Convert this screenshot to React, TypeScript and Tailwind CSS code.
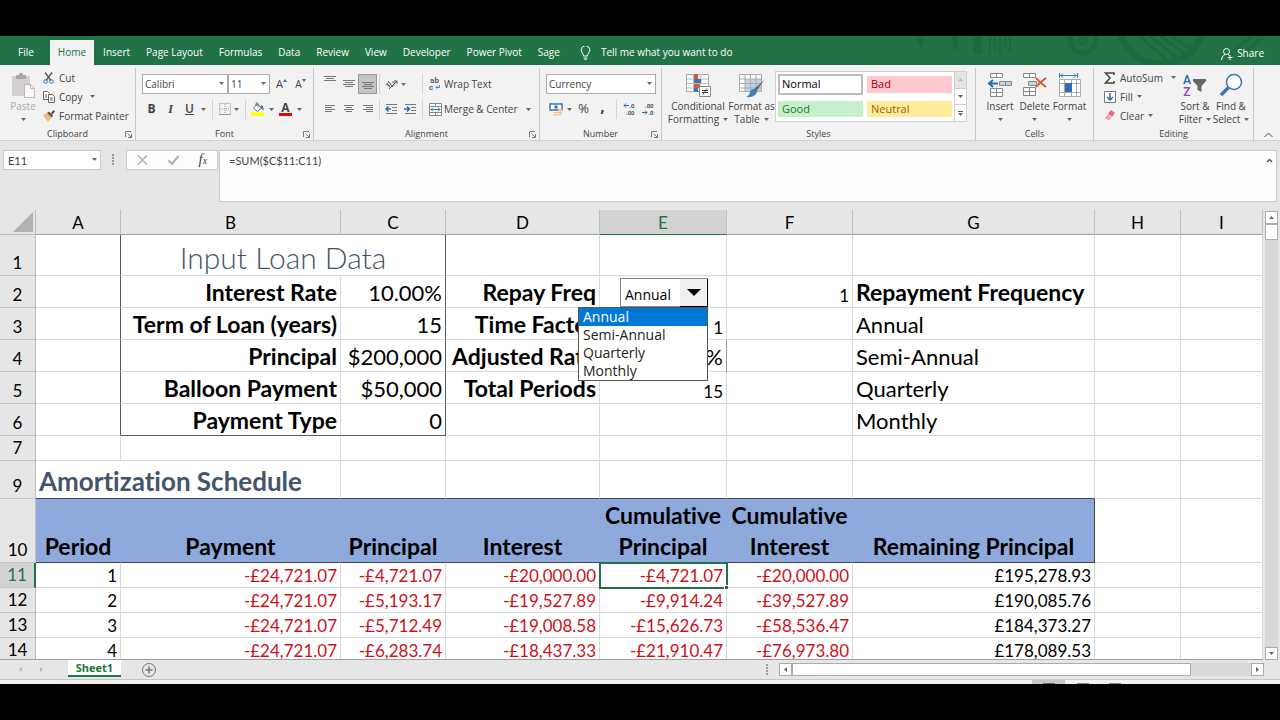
import React, { useState } from 'react';
import { twMerge } from 'tailwind-merge';

const tabs = [
  'File',
  'Home',
  'Insert',
  'Page Layout',
  'Formulas',
  'Data',
  'Review',
  'View',
  'Developer',
  'Power Pivot',
  'Sage',
];

const freqs = ['Annual', 'Semi-Annual', 'Quarterly', 'Monthly'];

const schedule = [
  ['1', '-£24,721.07', '-£4,721.07', '-£20,000.00', '-£4,721.07', '-£20,000.00', '£195,278.93'],
  ['2', '-£24,721.07', '-£5,193.17', '-£19,527.89', '-£9,914.24', '-£39,527.89', '£190,085.76'],
  ['3', '-£24,721.07', '-£5,712.49', '-£19,008.58', '-£15,626.73', '-£58,536.47', '£184,373.27'],
  ['4', '-£24,721.07', '-£6,283.74', '-£18,437.33', '-£21,910.47', '-£76,973.80', '£178,089.53'],
];

const Caret = ({ className = '' }: { className?: string }) => (
  <svg width="5" height="3" viewBox="0 0 5 3" className={twMerge('shrink-0 text-[#666]', className)}>
    <path d="M0 0h5L2.5 3z" fill="currentColor" />
  </svg>
);

const Sep = () => <span className="h-5 w-px shrink-0 bg-[#d4d4d4]" />;

const Launcher = () => (
  <svg width="7" height="7" viewBox="0 0 7 7" fill="none" stroke="#777">
    <path d="M.5 6V.5H6M2.5 2.5l3.5 3.5M6.5 3v3.5H3" />
  </svg>
);

type GroupProps = {
  label: string;
  className: string;
  launcher?: boolean;
  children: React.ReactNode;
};

const Group = ({ label, className, launcher, children }: GroupProps) => (
  <section
    aria-label={label}
    className={twMerge('flex shrink-0 flex-col border-r border-[#c8c8c8]', className)}
  >
    <div className="flex h-[61px] items-start">{children}</div>
    <div className="flex h-3 items-center px-0.5">
      <span className="w-2" />
      <span className="flex-1 text-center text-[9px] leading-3 text-[#444]">{label}</span>
      <button aria-label={`${label} settings`} className="w-2">
        {launcher && <Launcher />}
      </button>
    </div>
  </section>
);

type ToolProps = {
  label: string;
  className?: string;
  children: React.ReactNode;
};

const Tool = ({ label, className, children }: ToolProps) => (
  <button
    aria-label={label}
    className={twMerge('flex h-5 w-[19px] shrink-0 items-center justify-center', className)}
  >
    {children}
  </button>
);

type BigProps = {
  lines: string[];
  className: string;
  caretBelow?: boolean;
  children: React.ReactNode;
};

const BigButton = ({ lines, className, caretBelow, children }: BigProps) => (
  <button className={twMerge('flex shrink-0 flex-col items-center text-[10px] leading-[13px]', className)}>
    <span className="flex h-[30px] items-center">{children}</span>
    {lines.map((line, i) => (
      <span key={line} className="flex items-center gap-1 whitespace-nowrap">
        {line}
        {!caretBelow && i === lines.length - 1 && <Caret />}
      </span>
    ))}
    {caretBelow && (
      <span className="flex h-[13px] items-center">
        <Caret />
      </span>
    )}
  </button>
);

const SmallButton = ({ label, caret, children }: { label: string; caret?: string; children: React.ReactNode }) => (
  <button className="flex h-[19px] items-center whitespace-nowrap text-[10px] leading-4">
    <span className="flex w-4 items-center">{children}</span>
    {label}
    {caret && <Caret className={caret} />}
  </button>
);

// paragraph glyph, one stroke width per line
const Lines = ({ rows, align = 'center' }: { rows: number[]; align?: string }) => (
  <svg width="12" height="10" viewBox="0 0 12 10" stroke="#777">
    {rows.map((w, i) => {
      const x = align === 'left' ? 1 : align === 'right' ? 11 - w : 6 - w / 2;
      return <path key={i} d={`M${x} ${i * 2 + 1.5}h${w}`} />;
    })}
  </svg>
);

const PasteIcon = () => (
  <svg width="24" height="26" viewBox="0 0 24 26">
    <path d="M1 4h18v20H1z" fill="#d2ced2" />
    <path d="M5 3h3c0-3 4-3 4 0h3v4H5z" fill="#aaa6aa" />
    <path d="M13.500 12.500h6l4 4v9h-10z" fill="#fafafa" stroke="#b8b8b8" />
    <path d="M19.500 12.500v4h4" fill="none" stroke="#b8b8b8" />
  </svg>
);

const CutIcon = () => (
  <svg width="12" height="12" viewBox="0 0 12 12" fill="none">
    <path d="M2 .5l6 8M9 .5l-6 8" stroke="#555" strokeWidth="1.300" />
    <circle cx="2.500" cy="9.500" r="1.800" stroke="#3b73b4" />
    <circle cx="8.500" cy="9.500" r="1.800" stroke="#3b73b4" />
  </svg>
);

const CopyIcon = () => (
  <svg width="12" height="12" viewBox="0 0 12 12" fill="#fff" stroke="#666">
    <path d="M.5.5h4l2 2v6h-6z" />
    <path d="M5.500 3.500h4l2 2v6h-6zM7 7h3M7 9h3M2 4h2M2 6h2" />
  </svg>
);

const PainterIcon = () => (
  <svg width="12" height="12" viewBox="0 0 12 12">
    <path d="M0 5l4-2 5 4-4 5z" fill="#efbc7c" />
    <path d="M4 3l2-1.500 4 4L9 7.500z" fill="#555" />
    <path d="M8 3l2.500-3L12 1.500 9.500 4.500z" fill="#555" />
  </svg>
);

const BordersIcon = () => (
  <svg width="12" height="12" viewBox="0 0 12 12" fill="none" stroke="#999">
    <path d="M.5.5h11v11H.5zM6 1v10M1 6h10" strokeDasharray="1 1" />
    <path d="M0 11.500h12" />
  </svg>
);

const FillIcon = () => (
  <svg width="14" height="14" viewBox="0 0 14 14">
    <path d="M2.500 6l4-4 4 4-4 3.500z" fill="#fff" stroke="#666" />
    <path d="M5 4V1.500q1.500-1.500 2 0V5" fill="none" stroke="#666" />
    <path d="M10 3q3 1 2.500 6-1-2-3-3z" fill="#3b73b4" />
    <path d="M0 10.500h13V14H0z" fill="#ffff00" />
  </svg>
);

const OrientIcon = () => (
  <svg width="14" height="12" viewBox="0 0 14 12" fill="none" stroke="#555">
    <path d="M1 6l4 3M3 3l5 6M5.500 6.500a1.500 1.500 0 1 1-2-2M7 4.500a1.500 1.500 0 1 1 1 2.500M4 11l8-8M12 6V3H9" />
  </svg>
);

const IndentIcon = ({ flip }: { flip?: boolean }) => (
  <svg width="13" height="12" viewBox="0 0 13 12" fill="none">
    <path d="M1 1.500h11M7 4.500h5M7 7.500h5M1 10.500h11" stroke="#777" />
    {flip ? (
      <path d="M0 6h5M3 3.500L5.500 6 3 8.500" stroke="#2b6cb0" strokeWidth="1.500" />
    ) : (
      <path d="M1 6h5M3.500 3.500L1 6l2.500 2.500" stroke="#2b6cb0" strokeWidth="1.500" />
    )}
  </svg>
);

const WrapIcon = () => (
  <span className="flex w-[11px] flex-col font-[Roboto] text-[8px] leading-[9px] font-semibold text-[#555]">
    <span className="h-[7px]">ab</span>
    <span className="flex items-center gap-0.5">
      c
      <svg width="5" height="5" viewBox="0 0 5 5" fill="none" stroke="#3b73b4">
        <path d="M4.500 0v2.500H1M2.500 1L1 2.500 2.500 4" />
      </svg>
    </span>
  </span>
);

const MergeIcon = () => (
  <svg width="13" height="13" viewBox="0 0 13 13" fill="#fff">
    <path d="M.5.5h12v12H.5zM.5 3.500h12M.5 9.500h12M6.500.5v3M6.500 9.500v3" stroke="#888" />
    <path d="M2 6.500h9M4 4.500l-2 2 2 2M9 4.500l2 2-2 2" fill="none" stroke="#3b73b4" />
  </svg>
);

const AccountIcon = () => (
  <svg width="14" height="13" viewBox="0 0 14 13">
    <path d="M1 1h12v6H1z" fill="#fff" stroke="#3b73b4" strokeWidth="1.500" />
    <circle cx="7" cy="4" r="1.800" fill="#3b73b4" />
    <path d="M5 9h5v3.500H5zM9.500 5.500H13V12H9.500z" fill="#f0c37c" />
    <path d="M5 10.500h8M9.500 8H13" stroke="#fff" strokeWidth=".7" />
  </svg>
);

const Arrow = ({ right }: { right?: boolean }) => (
  <svg width="6" height="5" viewBox="0 0 6 5" fill="none" stroke="#2b6cb0" className="shrink-0">
    <path d={right ? 'M0 2.500h5M3 .5l2 2-2 2' : 'M6 2.500H1M3 .5l-2 2 2 2'} />
  </svg>
);

const DecimalIcon = ({ dec }: { dec?: boolean }) => (
  <span className="flex w-3 flex-col font-[Roboto] text-[6px] leading-[7px] font-semibold text-[#444]">
    <span className="flex items-center justify-end">
      {!dec && <Arrow />}
      {dec ? '.00' : '.0'}
    </span>
    <span className="flex items-center justify-end">
      {dec && <Arrow right />}
      {dec ? '.0' : '.00'}
    </span>
  </span>
);

const CondIcon = () => (
  <svg width="25" height="24" viewBox="0 0 25 24">
    <path d="M.5 1.500h22v17H.5z" fill="#fff" stroke="#aaa" />
    <path d="M.5 6h22M.5 10.500h22M.5 15h22M7.500 1v18M15 1v18" stroke="#bbb" />
    <path d="M8 1h4v5H8zM8 11h6v4H8z" fill="#d65a31" />
    <path d="M8 6h7v4H8zM8 15h4v4H8z" fill="#3b73b4" />
    <path d="M13.500 13.500h11v10h-11z" fill="#fff" stroke="#888" />
    <path d="M16 17.500h6M16 19.500h6M21 15.500l-4 6" stroke="#444" fill="none" />
  </svg>
);

const TableIcon = () => (
  <svg width="26" height="25" viewBox="0 0 26 25">
    <path d="M.5 1.500h22v17H.5z" fill="#fff" stroke="#aaa" />
    <path d="M6 6h16v12H6z" fill="#bdd3ea" />
    <path d="M.5 6h22M.5 10.500h22M.5 15h22M6 1v18M11.500 1v18M17 1v18" stroke="#aaa" />
    <path d="M25 7l-8 12-3-2z" fill="#666" />
    <path d="M14 16l4 3q-2 6-11 5 4-2 4-5 1-3 3-3z" fill="#3b82bd" />
  </svg>
);

const InsertIcon = () => (
  <svg width="24" height="24" viewBox="0 0 24 24" fill="#fff" stroke="#888">
    <path d="M2.500.5h12v4h-12zM8.500.5v4M2.500 15.500h12v8h-12zM2.500 19.500h12M8.500 15.500v8" />
    <path d="M11.500 8.500h12v4h-12zM17.500 8.500v4" fill="#bdd3ea" />
    <path d="M10 10.500H1M5 7l-4 3.500L5 14" fill="none" stroke="#2b6cb0" strokeWidth="2" />
  </svg>
);

const DeleteIcon = () => (
  <svg width="24" height="24" viewBox="0 0 24 24" fill="#fff" stroke="#888">
    <path d="M.5.5h12v4H.5zM6.500.5v4M.5 14.500h12v8H.5zM.5 18.500h12M6.500 14.500v8" />
    <path d="M5.500 8.500h8v4h-8z" fill="#bdd3ea" />
    <path d="M13 5q4 5 10 9M23 5q-6 4-10 9" fill="none" stroke="#d9532c" strokeWidth="2" />
  </svg>
);

const FormatIcon = () => (
  <svg width="24" height="25" viewBox="0 0 24 25" fill="#fff">
    <path d="M1.500 6.500h21v17h-21zM1.500 10.500h21M1.500 19.500h21M6.500 6.500v17M13.500 6.500v17M18.500 6.500v17" stroke="#aaa" />
    <path d="M7 10h7v9H7z" fill="#2f6db5" />
    <path d="M1.500 0v5M19.500 0v5M2 2.500h17M5 .5L3 2.500l2 2M16 .5l2 2-2 2" fill="none" stroke="#3b82bd" />
  </svg>
);

const SortIcon = () => (
  <span className="flex items-start">
    <span className="flex flex-col font-[Roboto] text-[12px] leading-[14px] font-semibold">
      <span className="h-3 text-[#2f6db5]">A</span>
      <span className="h-3 text-[#8a4fc0]">Z</span>
    </span>
    <svg width="14" height="14" viewBox="0 0 14 14" className="mt-1.5 ml-0.5">
      <path d="M0 0h13v2L8.500 7v6l-4-2V7L0 2z" fill="#666" />
    </svg>
  </span>
);

const FindIcon = () => (
  <svg width="24" height="24" viewBox="0 0 24 24" fill="none" stroke="#3b76b0">
    <circle cx="15" cy="9" r="7.500" strokeWidth="1.500" fill="#fff" />
    <path d="M9.500 14.500L2 22" strokeWidth="3.500" />
  </svg>
);

const Header = () => (
  <header className="relative flex h-[29px] items-end overflow-hidden bg-[#217346] text-white">
    <svg
      width="460"
      height="29"
      viewBox="0 0 460 29"
      fill="none"
      stroke="#1e6a40"
      className="absolute top-0 right-0"
    >
      <path d="M95 1h10l-4 11zM132 0h6v13h-5z" fill="#1e6a40" stroke="none" />
      <path d="M153 0h9v18h-9z" fill="#1e6a40" stroke="none" />
      <path d="M170 0v18M175 0v14M180 0v18M185 0v12M190 0v16" strokeWidth="2" />
      <circle cx="263" cy="4" r="13" strokeWidth="5" />
      <circle cx="263" cy="4" r="4" strokeWidth="3" />
      <circle cx="341" cy="-14" r="42" strokeWidth="7" />
      <path d="M315-4l34 30M325-4l32 26M335-4l30 22M345-4l26 18M432 0l-26 22M444 0l-28 24" strokeWidth="3" />
    </svg>
    <nav className="relative flex h-[25px] pl-2.5 text-[10px]">
      {tabs.map((tab) => (
        <a
          key={tab}
          href="#"
          className={
            tab === 'Home'
              ? 'mr-px ml-2 flex items-center bg-[#f2f2f2] px-2 text-[#217346]'
              : 'flex items-center px-2 whitespace-nowrap'
          }
        >
          {tab}
        </a>
      ))}
    </nav>
    <div className="relative flex h-[25px] flex-1 items-center text-[10px]">
      <svg width="11" height="14" viewBox="0 0 11 14" fill="none" stroke="#fff" className="mr-2.5 ml-3">
        <path d="M3.500 10Q3.500 8 2 6.500a4.300 4.300 0 1 1 7 0Q7.500 8 7.500 10zM3.500 12h4M4.500 13.500h2" />
      </svg>
      <input
        aria-label="Tell me what you want to do"
        className="w-40 bg-transparent outline-none placeholder:text-white"
        placeholder="Tell me what you want to do"
      />
      <button className="mr-4 ml-auto flex items-center gap-1 pt-0.5">
        <svg width="12" height="12" viewBox="0 0 12 12" fill="none" stroke="#fff">
          <circle cx="5.500" cy="3.500" r="3" />
          <path d="M.5 12q0-4 3.500-5.500M7 6.500l1.500 1M9 7v5M6.500 9.500h5" />
        </svg>
        Share
      </button>
    </div>
  </header>
);

const Combo = ({ label, value, className }: { label: string; value: string; className: string }) => (
  <div className={twMerge('relative', className)}>
    <select
      aria-label={label}
      defaultValue={value}
      className="block h-5 w-full appearance-none border border-[#ababab] bg-white px-0.5 text-[10px] leading-4 text-[#444]"
    >
      <option>{value}</option>
    </select>
    <Caret className="pointer-events-none absolute top-2 right-1" />
  </div>
);

const Ribbon = () => (
  <div className="flex h-[76px] border-b border-[#d2d2d2] bg-[#f2f2f2] pt-[3px] text-[#444]">
    <Group label="Clipboard" launcher className="w-[136px]">
      <BigButton lines={['Paste']} caretBelow className="ml-2 w-[30px] pt-0.5 text-[#aaa]">
        <PasteIcon />
      </BigButton>
      <div className="ml-[5px] flex flex-col">
        <SmallButton label="Cut">
          <CutIcon />
        </SmallButton>
        <SmallButton label="Copy" caret="ml-2">
          <CopyIcon />
        </SmallButton>
        <SmallButton label="Format Painter">
          <PainterIcon />
        </SmallButton>
      </div>
    </Group>

    <Group label="Font" launcher className="w-[178px]">
      <div className="flex flex-col gap-[5px] pt-1.5 pl-1.5">
        <div className="flex">
          <Combo label="Font" value="Calibri" className="w-[86px]" />
          <Combo label="Font size" value="11" className="w-[42px]" />
          <Tool label="Grow font" className="ml-0.5 text-[11px]">
            A
            <svg width="4" height="3" viewBox="0 0 4 3" className="mb-2">
              <path d="M0 3l2-3 2 3z" fill="#3b73b4" />
            </svg>
          </Tool>
          <Tool label="Shrink font" className="text-[10px]">
            A
            <svg width="4" height="3" viewBox="0 0 4 3" className="mb-2">
              <path d="M0 0l2 3 2-3z" fill="#3b73b4" />
            </svg>
          </Tool>
        </div>
        <div className="flex items-center text-[12px]">
          <Tool label="Bold" className="font-bold">
            B
          </Tool>
          <Tool label="Italic" className="font-[Liberation_Serif] font-bold italic">
            I
          </Tool>
          <Tool label="Underline" className="font-semibold underline">
            U
          </Tool>
          <Caret className="mr-1.5 ml-0.5" />
          <Sep />
          <Tool label="Borders" className="ml-0.5">
            <BordersIcon />
          </Tool>
          <Caret className="mr-1.5" />
          <Sep />
          <Tool label="Fill color" className="ml-0.5">
            <FillIcon />
          </Tool>
          <Caret className="ml-0.5" />
          <Tool label="Font color" className="ml-0.5 flex-col text-[12px] leading-[11px] font-bold">
            A<span className="h-[3px] w-[13px] bg-[#e80000]" />
          </Tool>
          <Caret className="ml-0.5" />
        </div>
      </div>
    </Group>

    <Group label="Alignment" launcher className="w-[226px]">
      <div className="flex flex-col gap-[5px] pt-1.5 pl-1.5">
        <div className="flex items-center">
          <Tool label="Top align" className="pb-2">
            <Lines rows={[12, 8, 12]} />
          </Tool>
          <Tool label="Middle align">
            <Lines rows={[12, 8, 12, 8]} />
          </Tool>
          <Tool label="Bottom align" className="border border-[#999] bg-[#c5c5c5] pt-1">
            <Lines rows={[12, 8, 12, 8]} />
          </Tool>
          <span className="w-0.5" />
          <Sep />
          <Tool label="Orientation" className="ml-0.5">
            <OrientIcon />
          </Tool>
          <Caret className="mr-4" />
          <Sep />
          <button className="ml-1.5 flex h-5 items-center gap-1 whitespace-nowrap text-[10px]">
            <WrapIcon />
            Wrap Text
          </button>
        </div>
        <div className="flex items-center">
          <Tool label="Align left">
            <Lines rows={[10, 7, 10, 7]} align="left" />
          </Tool>
          <Tool label="Center">
            <Lines rows={[10, 6, 10, 6]} />
          </Tool>
          <Tool label="Align right">
            <Lines rows={[10, 7, 10, 7]} align="right" />
          </Tool>
          <span className="w-0.5" />
          <Sep />
          <Tool label="Decrease indent" className="ml-0.5">
            <IndentIcon />
          </Tool>
          <Tool label="Increase indent">
            <IndentIcon flip />
          </Tool>
          <span className="w-0.5" />
          <Sep />
          <button className="ml-1.5 flex h-5 items-center gap-0.5 whitespace-nowrap text-[10px]">
            <MergeIcon />
            Merge &amp; Center
            <Caret className="ml-1.5" />
          </button>
        </div>
      </div>
    </Group>

    <Group label="Number" launcher className="w-[122px]">
      <div className="flex flex-col gap-[5px] pt-1.5 pl-1.5">
        <Combo label="Number format" value="Currency" className="w-[110px]" />
        <div className="flex items-center text-[13px]">
          <Tool label="Accounting format">
            <AccountIcon />
          </Tool>
          <Caret className="ml-0.5" />
          <Tool label="Percent style" className="ml-0.5">
            %
          </Tool>
          <Tool label="Comma style" className="pb-1.5 text-[16px] font-bold">
            ,
          </Tool>
          <span className="w-1" />
          <Sep />
          <Tool label="Increase decimal" className="ml-0.5">
            <DecimalIcon />
          </Tool>
          <Tool label="Decrease decimal">
            <DecimalIcon dec />
          </Tool>
        </div>
      </div>
    </Group>

    <Group label="Styles" className="w-[314px]">
      <BigButton lines={['Conditional', 'Formatting']} className="ml-1.5 w-15 pt-0.5">
        <CondIcon />
      </BigButton>
      <BigButton lines={['Format as', 'Table']} className="w-[47px] pt-0.5">
        <TableIcon />
      </BigButton>
      <div className="mt-[3px] flex h-[51px] w-[192px] border border-[#d0d0d0] bg-white text-[11px] leading-4">
        <div className="grid flex-1 grid-cols-2 gap-x-1 gap-y-1 p-0.5 text-left">
          <button className="border-2 border-[#bdbdbd] px-0.5 text-left text-black">Normal</button>
          <button className="my-0.5 bg-[#ffc7ce] px-1 text-left text-[#9c0006]">Bad</button>
          <button className="my-0.5 bg-[#c6efce] px-1 text-left text-[#1e7a1e]">Good</button>
          <button className="my-0.5 bg-[#ffeb9c] px-1 text-left text-[#9c6500]">Neutral</button>
        </div>
        <div className="flex w-3 flex-col divide-y divide-[#d0d0d0] border-l border-[#d0d0d0]">
          <button aria-label="Previous styles" className="flex flex-1 items-center justify-center bg-[#e4e4e4]">
            <Caret className="rotate-180 text-[#bbb]" />
          </button>
          <button aria-label="Next styles" className="flex flex-1 items-center justify-center">
            <Caret />
          </button>
          <button aria-label="More styles" className="flex flex-1 flex-col items-center justify-center gap-px">
            <span className="h-px w-[5px] bg-[#555]" />
            <Caret />
          </button>
        </div>
      </div>
    </Group>

    <Group label="Cells" className="w-[118px]">
      <BigButton lines={['Insert']} caretBelow className="ml-[7px] w-[34px] pt-0.5">
        <InsertIcon />
      </BigButton>
      <BigButton lines={['Delete']} caretBelow className="w-[35px] pt-0.5">
        <DeleteIcon />
      </BigButton>
      <BigButton lines={['Format']} caretBelow className="w-[35px] pt-0.5">
        <FormatIcon />
      </BigButton>
    </Group>

    <Group label="Editing" className="w-[160px]">
      <div className="ml-2.5 flex w-[73px] flex-col">
        <SmallButton label="AutoSum" caret="ml-2">
          <svg width="11" height="12" viewBox="0 0 11 12" fill="none" stroke="#444" strokeWidth="1.500">
            <path d="M10 3V1H1.500L6 6l-4.500 5H10V9" />
          </svg>
        </SmallButton>
        <SmallButton label="Fill" caret="ml-1">
          <svg width="12" height="12" viewBox="0 0 12 12" fill="#fff" stroke="#777">
            <path d="M.5.5h11v11H.5z" />
            <path d="M6 2v7M3 6l3 3 3-3" fill="none" stroke="#2b6cb0" strokeWidth="1.500" />
          </svg>
        </SmallButton>
        <SmallButton label="Clear" caret="ml-1">
          <svg width="12" height="11" viewBox="0 0 12 11">
            <path d="M7 0l4 3-3 4-4-3z" fill="#e8677f" />
            <path d="M3.500 4.500l4 3L5 10.500 1 8z" fill="#f0a0ae" />
          </svg>
        </SmallButton>
      </div>
      <BigButton lines={['Sort &', 'Filter']} className="w-9 pt-0.5">
        <SortIcon />
      </BigButton>
      <BigButton lines={['Find &', 'Select']} className="w-9 pt-0.5">
        <FindIcon />
      </BigButton>
    </Group>

    <button aria-label="Collapse ribbon" className="mt-auto mr-[7px] mb-0.5 ml-auto">
      <svg width="9" height="6" viewBox="0 0 9 6" fill="none" stroke="#555">
        <path d="M.5 5l4-4 4 4" />
      </svg>
    </button>
  </div>
);

const Dots = () => (
  <svg width="3" height="11" viewBox="0 0 3 11" fill="#999">
    <path d="M0 0h2v2H0zM0 3h2v2H0zM0 6h2v2H0zM0 9h2v2H0z" />
  </svg>
);

const FormulaBar = () => (
  <div className="flex h-[69px] items-start bg-[#e6e6e6] px-[3px] pt-[9px] font-[Lato] text-[11px] text-[#444]">
    <div className="relative">
      <input
        aria-label="Name box"
        defaultValue="E11"
        className="block h-5 w-[98px] border border-[#c8c8c8] bg-white px-1 outline-none"
      />
      <Caret className="absolute top-2 right-1" />
    </div>
    <span className="mx-[11px] mt-1">
      <Dots />
    </span>
    <div className="flex h-5 w-[92px] items-center justify-around border border-[#c8c8c8] bg-[#fdfdfd]">
      <button aria-label="Cancel">
        <svg width="11" height="10" viewBox="0 0 11 10" fill="none" stroke="#b0b0b0" strokeWidth="1.500">
          <path d="M1 .5l9 9M10 .5l-9 9" />
        </svg>
      </button>
      <button aria-label="Enter">
        <svg width="11" height="10" viewBox="0 0 11 10" fill="none" stroke="#b0b0b0" strokeWidth="2">
          <path d="M.5 5.500L4 9l6.500-8" />
        </svg>
      </button>
      <button
        aria-label="Insert function"
        className="font-[Liberation_Serif] text-[15px] leading-4 text-[#444] italic"
      >
        f<span className="text-[10px]">x</span>
      </button>
    </div>
    <div className="relative ml-px flex-1">
      <textarea
        aria-label="Formula"
        defaultValue="=SUM($C$11:C11)"
        className="block h-[52px] w-full resize-none border border-[#c8c8c8] bg-[#fdfdfd] px-[9px] py-0.5 leading-4 outline-none"
      />
      <svg width="7" height="5" viewBox="0 0 7 5" fill="none" stroke="#555" strokeWidth="1.500" className="absolute top-2 right-1">
        <path d="M1 4l2.500-2.500L6 4" />
      </svg>
    </div>
  </div>
);

type CellProps = {
  className?: string;
  span?: number;
  children?: React.ReactNode;
};

const Cell = ({ className, span, children }: CellProps) => (
  <td
    colSpan={span}
    className={twMerge(
      'border-r border-b border-r-[#d9d9d9] border-b-[#d9d9d9] px-[3px] py-0 text-right align-bottom text-[17px] leading-[22px] whitespace-nowrap',
      className,
    )}
  >
    {children}
  </td>
);

const RowHead = ({ n, active }: { n: number; active?: boolean }) => (
  <th
    scope="row"
    className={twMerge(
      'border-r border-b border-r-[#bdbdbd] border-b-[#c6c6c6] bg-[#e6e6e6] p-0 align-bottom text-[17px] leading-6 font-normal',
      active && 'border-r-2 border-r-[#217346] bg-[#d2d2d2] text-[#217346]',
    )}
  >
    {n}
  </th>
);

const Empty = ({ count }: { count: number }) => (
  <>
    {Array.from({ length: count }, (_, i) => (
      <Cell key={i} />
    ))}
  </>
);

const edge = 'border-r-[#5a5a5a]';
const big = 'text-[22px] leading-[29px]';
const bold = 'text-[23px] leading-[29px] font-bold';

const FreqPicker = () => {
  const [freq, setFreq] = useState('Annual');
  return (
    <div className="relative ml-[17px] h-[29px] w-[88px] text-left font-[Open_Sans] text-[14px] leading-[18px]">
      <select
        aria-label="Repay Freq"
        value={freq}
        onChange={(e) => setFreq(e.target.value)}
        className="block h-full w-full appearance-none border border-[#888] bg-white pt-1 pl-1"
      >
        {freqs.map((f) => (
          <option key={f}>{f}</option>
        ))}
      </select>
      <span className="pointer-events-none absolute top-px right-0 flex h-7 w-7 items-center justify-center border-r border-b border-black bg-[#f0f0f0]">
        <svg width="14" height="7" viewBox="0 0 14 7">
          <path d="M0 0h14L7 7z" />
        </svg>
      </span>
      <ul className="absolute top-full right-0 z-10 w-[130px] border border-[#555] bg-white">
        {freqs.map((f) => (
          <li key={f}>
            <button
              onClick={() => setFreq(f)}
              className={twMerge('block w-full px-1 text-left text-[#222]', f === freq && 'bg-[#0078d7] text-white')}
            >
              {f}
            </button>
          </li>
        ))}
      </ul>
    </div>
  );
};

const Sheet = () => (
  <table className="w-full table-fixed border-separate border-spacing-0 bg-white font-[Lato] text-black [font-variant-ligatures:none]">
    <colgroup>
      <col className="w-9" />
      <col className="w-[85px]" />
      <col className="w-[220px]" />
      <col className="w-[105px]" />
      <col className="w-[154px]" />
      <col className="w-[127px]" />
      <col className="w-[126px]" />
      <col className="w-[242px]" />
      <col className="w-[86px]" />
      <col />
    </colgroup>
    <thead>
      <tr className="h-[25px] bg-[#e6e6e6]">
        <th className="border-r border-b border-[#bdbdbd] p-0 align-bottom">
          <svg width="20" height="20" viewBox="0 0 20 20" className="mb-0.5 ml-[13px]">
            <path d="M20 0v20H0z" fill="#b2b2b2" />
          </svg>
        </th>
        {'ABCDEFGHI'.split('').map((c) => (
          <th
            key={c}
            scope="col"
            className={twMerge(
              'border-r border-b border-r-[#c0c0c0] border-b-[#9f9f9f] p-0 align-bottom text-[17px] leading-[22px] font-normal',
              c === 'E' && 'border-b-[#217346] bg-[#d2d2d2] text-[#217346]',
            )}
          >
            {c}
          </th>
        ))}
      </tr>
    </thead>
    <tbody>
      <tr className="h-[41px]">
        <RowHead n={1} />
        <Cell className={edge} />
        <Cell span={2} className={twMerge(edge, 'text-center text-[30px] leading-9 font-light text-[#44546a]')}>
          Input Loan Data
        </Cell>
        <Empty count={6} />
      </tr>
      <tr className="h-8">
        <RowHead n={2} />
        <Cell className={edge} />
        <Cell className={bold}>Interest Rate</Cell>
        <Cell className={twMerge(big, edge)}>10.00%</Cell>
        <Cell className={bold}>Repay Freq</Cell>
        <Cell>
          <FreqPicker />
        </Cell>
        <Cell>1</Cell>
        <Cell className={twMerge(bold, 'text-left')}>Repayment Frequency</Cell>
        <Empty count={2} />
      </tr>
      <tr className="h-8">
        <RowHead n={3} />
        <Cell className={edge} />
        <Cell className={bold}>Term of Loan (years)</Cell>
        <Cell className={twMerge(big, edge)}>15</Cell>
        <Cell className={bold}>Time Factor</Cell>
        <Cell>1</Cell>
        <Cell />
        <Cell className={twMerge(big, 'text-left')}>Annual</Cell>
        <Empty count={2} />
      </tr>
      <tr className="h-8">
        <RowHead n={4} />
        <Cell className={edge} />
        <Cell className={bold}>Principal</Cell>
        <Cell className={twMerge(big, edge)}>$200,000</Cell>
        <Cell className={bold}>Adjusted Rate</Cell>
        <Cell className={twMerge(big, 'border-r-[#999]')}>10.00%</Cell>
        <Cell />
        <Cell className={twMerge(big, 'text-left')}>Semi-Annual</Cell>
        <Empty count={2} />
      </tr>
      <tr className="h-8">
        <RowHead n={5} />
        <Cell className={edge} />
        <Cell className={bold}>Balloon Payment</Cell>
        <Cell className={twMerge(big, edge)}>$50,000</Cell>
        <Cell className={bold}>Total Periods</Cell>
        <Cell>15</Cell>
        <Cell />
        <Cell className={twMerge(big, 'text-left')}>Quarterly</Cell>
        <Empty count={2} />
      </tr>
      <tr className="h-8">
        <RowHead n={6} />
        <Cell className={edge} />
        <Cell className={twMerge(bold, 'border-b-[#5a5a5a]')}>Payment Type</Cell>
        <Cell className={twMerge(big, edge, 'border-b-[#5a5a5a]')}>0</Cell>
        <Empty count={3} />
        <Cell className={twMerge(big, 'text-left')}>Monthly</Cell>
        <Empty count={2} />
      </tr>
      <tr className="h-[25px]">
        <RowHead n={7} />
        <Empty count={9} />
      </tr>
      {/* row 8 is hidden */}
      <tr className="h-[38px]">
        <RowHead n={9} />
        <Cell span={2} className="border-b-[#444] text-left text-[26px] leading-[34px] font-bold text-[#44546a]">
          Amortization Schedule
        </Cell>
        {['C', 'D', 'E', 'F', 'G'].map((c) => (
          <Cell key={c} className="border-b-[#444]" />
        ))}
        <Empty count={2} />
      </tr>
      <tr className="h-16">
        <RowHead n={10} />
        {['Period', 'Payment', 'Principal', 'Interest', 'Cumulative Principal', 'Cumulative Interest', 'Remaining Principal'].map(
          (h) => (
            <Cell
              key={h}
              className={twMerge(
                'border-r-[#8ea9db] border-b-[#444] bg-[#8ea9db] px-0 text-center text-[23px] leading-[31px] font-bold whitespace-normal',
                h === 'Remaining Principal' && 'border-r-[#444]',
              )}
            >
              {h}
            </Cell>
          ),
        )}
        <Empty count={2} />
      </tr>
      {schedule.map((row, r) => (
        <tr key={r} className="h-[25px]">
          <RowHead n={11 + r} active={r === 0} />
          {row.map((v, c) => (
            <Cell
              key={c}
              className={twMerge(
                v.startsWith('-') && 'text-[#d01018]',
                r === 0 && c === 4 && 'relative outline-2 -outline-offset-1 outline-[#217346]',
              )}
            >
              {v}
              {r === 0 && c === 4 && (
                <span className="absolute -right-0.5 -bottom-0.5 h-1 w-1 border-t border-l border-white bg-[#217346]" />
              )}
            </Cell>
          ))}
          <Empty count={2} />
        </tr>
      ))}
    </tbody>
  </table>
);

const scrollBtn = 'flex h-[13px] w-[13px] shrink-0 items-center justify-center border border-[#ababab] bg-white';

export default function App() {
  return (
    <div className="flex min-h-screen flex-col bg-black py-9 font-[Open_Sans,sans-serif]">
      <Header />
      <Ribbon />
      <FormulaBar />
      <main className="flex h-[450px] bg-[#e6e6e6]">
        <div className="flex-1 overflow-hidden border-b border-[#9f9f9f]">
          <Sheet />
        </div>
        <div className="flex w-[17px] flex-col items-center pt-px">
          <button aria-label="Scroll up" className={scrollBtn}>
            <Caret className="rotate-180" />
          </button>
          <div className="w-[13px] flex-1 bg-[#d9d9d9]">
            <div className="h-4 border border-[#ababab] bg-white" />
          </div>
          <button aria-label="Scroll down" className={scrollBtn}>
            <Caret />
          </button>
        </div>
      </main>
      <div className="flex h-5 items-start border-b border-[#c6c6c6] bg-[#e6e6e6]">
        <div className="flex w-[68px] items-center gap-4 pt-2 pl-[18px]">
          <Caret className="rotate-90 text-[#bbb]" />
          <Caret className="-rotate-90 text-[#bbb]" />
        </div>
        <button className="h-[17px] w-[53px] border-b-2 border-[#217346] bg-white text-[11px] leading-[14px] font-bold text-[#217346]">
          Sheet1
        </button>
        <button aria-label="New sheet" className="mt-[3px] ml-[21px]">
          <svg width="14" height="14" viewBox="0 0 14 14" fill="none" stroke="#777">
            <circle cx="7" cy="7" r="6.500" />
            <path d="M7 3.500v7M3.500 7h7" strokeWidth="1.500" />
          </svg>
        </button>
        <div className="ml-auto flex w-[514px] items-center pt-[3px]">
          <span className="mr-2.5">
            <Dots />
          </span>
          <button aria-label="Scroll left" className={scrollBtn}>
            <Caret className="rotate-90" />
          </button>
          <div className="h-[13px] flex-1 bg-[#d9d9d9]">
            <div className="h-full w-[87%] border border-[#ababab] bg-white" />
          </div>
          <button aria-label="Scroll right" className={twMerge(scrollBtn, 'mr-4')}>
            <Caret className="-rotate-90" />
          </button>
        </div>
      </div>
      <footer className="flex h-1 items-end justify-end gap-5 bg-[#f2f2f2] pr-[159px]">
        <span className="flex h-full w-[33px] items-end justify-center bg-[#c8c8c8]">
          <span className="h-px w-3 bg-[#666]" />
        </span>
        <span className="-ml-2 h-px w-3 bg-[#888]" />
        <span className="h-px w-3 bg-[#888]" />
      </footer>
    </div>
  );
}
